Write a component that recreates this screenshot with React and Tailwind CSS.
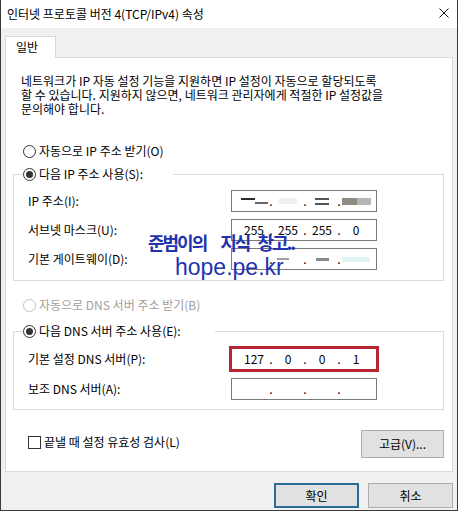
import React from "react";

const Radio = ({ checked, disabled }) => (
  <span className={`w-[13px] h-[13px] shrink-0 rounded-full border flex items-center justify-center bg-white ${disabled ? "border-[#c4c4c4]" : "border-[#333]"}`}>
    {checked && <span className="w-[7px] h-[7px] rounded-full bg-[#333]" />}
  </span>
);

const RadioRow = ({ label, checked, disabled }) => (
  <div className={`flex items-center h-[16px] gap-[3px] ${disabled ? "text-[#a0a0a0]" : ""}`}>
    <Radio checked={checked} disabled={disabled} />
    <span className="leading-[16px]">{label}</span>
  </div>
);

const IpField = ({ parts = ["", "", "", ""], red }) => (
  <div className={`w-[146px] h-[22px] border border-[#7a7a7a] bg-white flex items-center pl-[8px] ${red ? "outline-3 outline-[#b8242f] -outline-offset-1" : ""}`}>
    {parts.map((p, i) => (
      <React.Fragment key={i}>
        <span className="w-[28px] h-[20px] flex items-center justify-center leading-[20px]">{p}</span>
        {i < 3 && <span className="w-[6px] text-center leading-[20px]">.</span>}
      </React.Fragment>
    ))}
  </div>
);

const Row = ({ label, children }) => (
  <div className="flex items-center">
    <span className="w-[217px] pl-[14px] leading-[16px]">{label}</span>
    {children}
  </div>
);

export default function App() {
  const ipMasked = [
    <span className="flex flex-col gap-[2px] w-[28px] px-[1px]">
      <span className="h-[2px] w-[14px] bg-[#2a2a2a]" />
      <span className="h-[2px] w-[13px] ml-[14px] bg-[#666]" />
    </span>,
    <span className="w-[18px] h-[6px] bg-[#efefef]" />,
    <span className="flex flex-col gap-[3px]">
      <span className="h-[2px] w-[14px] bg-[#555]" />
      <span className="h-[2px] w-[14px] bg-[#555]" />
    </span>,
    <span className="flex w-[29px] h-[7px]">
      <span className="w-[15px] bg-[#8c8c80]" />
      <span className="w-[14px] bg-[#b5b5b5]" />
    </span>,
  ];
  const gwMasked = [
    "",
    <span className="h-[2px] w-[12px] -ml-[10px] bg-[#a0a0a0]" />,
    <span className="h-[3px] w-[13px] bg-[#8a8a8a]" />,
    <span className="w-[28px] h-[5px] bg-[#e0f4f4]" />,
  ];

  return (
    <div className="relative w-[460px] h-[512px] bg-white text-[12px] text-black font-['Noto_Sans_CJK_KR',sans-serif]">
      <div className="w-[458px] h-[511px] flex flex-col border-x border-b border-[#3a3a3a] bg-[#f0f0f0]">
        <div className="h-[28px] shrink-0 bg-white flex items-center justify-between pl-[6px] pr-[8px]">
          <span className="leading-[16px]">인터넷 프로토콜 버전 4(TCP/IPv4) 속성</span>
          <svg width="10" height="10" viewBox="0 0 10 10" className="mt-[-2px]">
            <path d="M0.5 0.5 L9.5 9.5 M9.5 0.5 L0.5 9.5" stroke="#111" strokeWidth="1" fill="none" />
          </svg>
        </div>

        <div className="flex flex-col px-[4px] pt-[8px]">
          <div className="flex">
            <div className="relative z-10 -mb-px w-[51px] h-[22px] bg-white border border-b-0 border-[#d9d9d9] pl-[10px] leading-[20px]">
              일반
            </div>
          </div>

          <div className="h-[415px] bg-white border border-[#d9d9d9] pl-[7px] pr-[8px] pt-[16px] flex flex-col">
            <p className="ml-[8px] leading-[14px]">
              네트워크가 IP 자동 설정 기능을 지원하면 IP 설정이 자동으로 할당되도록
              <br />할 수 있습니다. 지원하지 않으면, 네트워크 관리자에게 적절한 IP 설정값을
              <br />문의해야 합니다.
            </p>

            <div className="ml-[10px] mt-[27px]">
              <RadioRow label="자동으로 IP 주소 받기(O)" />
            </div>

            <fieldset className="mt-[7px] border border-[#dcdcdc] pb-[10px] flex flex-col gap-[7px]">
              <legend className="ml-[9px] pr-[30px] bg-white">
                <RadioRow label="다음 IP 주소 사용(S):" checked />
              </legend>
              <div className="mt-[1px]" />
              <Row label="IP 주소(I):">
                <IpField parts={ipMasked} />
              </Row>
              <Row label="서브넷 마스크(U):">
                <IpField parts={["255", "255", "255", "0"]} />
              </Row>
              <Row label="기본 게이트웨이(D):">
                <IpField parts={gwMasked} />
              </Row>
            </fieldset>

            <div className="ml-[10px] mt-[16px]">
              <RadioRow label="자동으로 DNS 서버 주소 받기(B)" disabled />
            </div>

            <fieldset className="mt-[10px] border border-[#dcdcdc] pb-[9px] flex flex-col gap-[8px]">
              <legend className="ml-[9px] pr-[34px] bg-white">
                <RadioRow label="다음 DNS 서버 주소 사용(E):" checked />
              </legend>
              <div className="mt-[1px]" />
              <Row label="기본 설정 DNS 서버(P):">
                <IpField parts={["127", "0", "0", "1"]} red />
              </Row>
              <Row label="보조 DNS 서버(A):">
                <IpField />
              </Row>
            </fieldset>

            <div className="mt-[20px] flex items-start justify-between">
              <div className="mt-[4px] ml-[15px] flex items-center gap-[3px] h-[16px]">
                <span className="w-[13px] h-[13px] border border-[#333] bg-white" />
                <span className="leading-[16px]">끝낼 때 설정 유효성 검사(L)</span>
              </div>
              <button className="w-[83px] h-[28px] bg-[#e1e1e1] border border-[#adadad] leading-[16px]">
                고급(V)...
              </button>
            </div>
          </div>

          <div className="mt-[11px] flex justify-end gap-[9px]">
            <button className="w-[85px] h-[25px] bg-[#e1e1e1] border-2 border-[#2a6c96] leading-[16px]">확인</button>
            <button className="w-[85px] h-[25px] bg-[#e1e1e1] border border-[#adadad] leading-[16px]">취소</button>
          </div>
        </div>
      </div>

      <div className="absolute left-[148px] top-[229px] text-[18px] tracking-[-2px] font-bold leading-[26px] text-[#2233b0] whitespace-nowrap">
        <span>준범이의</span>
        <span className="ml-[14px]">지식</span>
        <span className="ml-[8px]">창고..</span>
      </div>
      <div className="absolute left-[175px] top-[254px] text-[23px] leading-[27px] text-[#2233b0] font-['Liberation_Sans',sans-serif]">
        hope.pe.kr
      </div>
    </div>
  );
}
